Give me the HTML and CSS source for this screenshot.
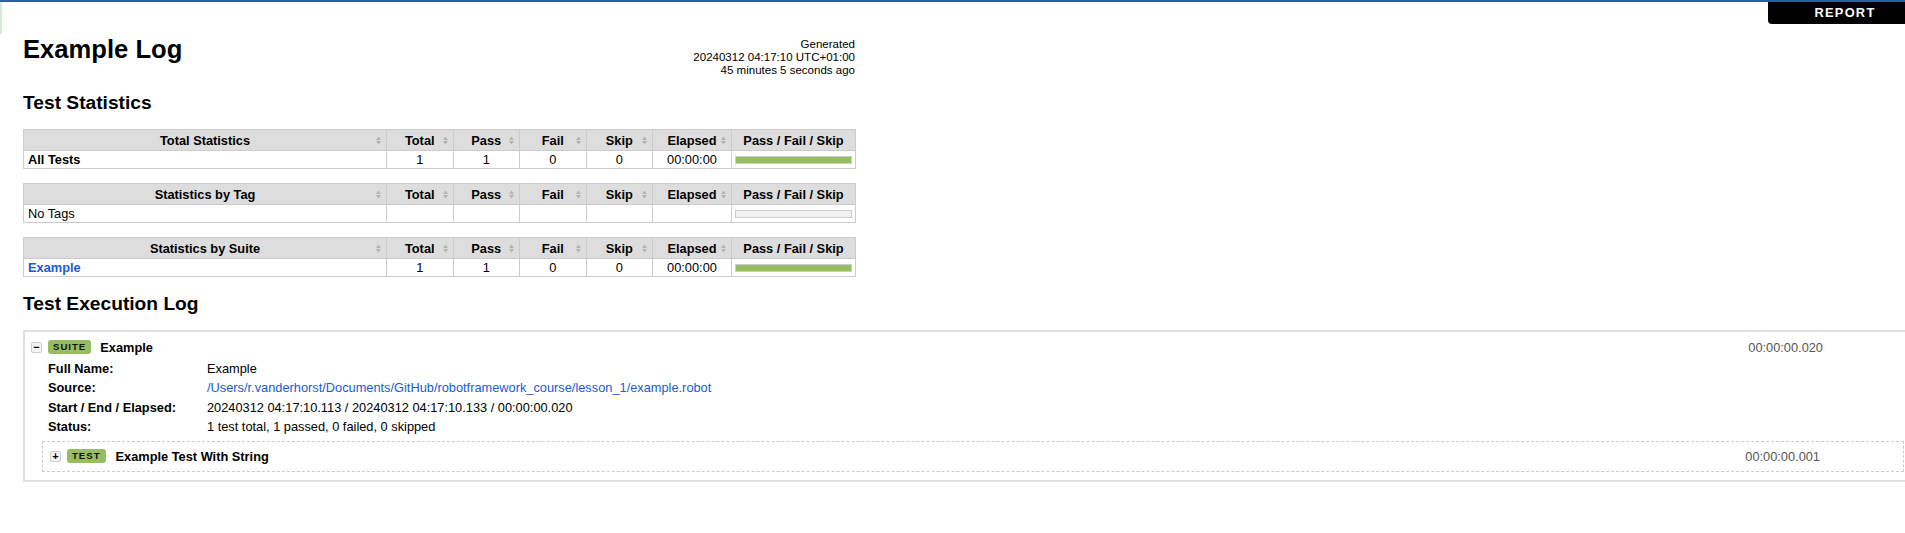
FILE: index.html
```html
<!DOCTYPE html>
<html lang="en">
<head>
<meta charset="utf-8">
<title>Example Log</title>
<link rel="stylesheet" href="styles.css">
</head>
<body>
<div class="topline"></div>
<div class="leftstrip"></div>
<a class="report-link" href="#">REPORT</a>
<div class="page">
  <div class="header">
    <h1 class="title">Example Log</h1>
    <div class="generated">Generated<br>20240312 04:17:10 UTC+01:00<br>45 minutes 5 seconds ago</div>
  </div>

  <h2 class="section-title">Test Statistics</h2>

  <table class="stats">
    <colgroup><col class="c-name"><col class="c-stat"><col class="c-stat"><col class="c-stat"><col class="c-stat"><col class="c-elapsed"><col class="c-graph"></colgroup>
    <thead><tr>
      <th>Total Statistics<svg class="sort" viewBox="0 0 5 9"><path d="M0 4L2.5 0.6L5 4Z M0 5L5 5L2.5 8.4Z"/></svg></th>
      <th>Total<svg class="sort" viewBox="0 0 5 9"><path d="M0 4L2.5 0.6L5 4Z M0 5L5 5L2.5 8.4Z"/></svg></th>
      <th>Pass<svg class="sort" viewBox="0 0 5 9"><path d="M0 4L2.5 0.6L5 4Z M0 5L5 5L2.5 8.4Z"/></svg></th>
      <th>Fail<svg class="sort" viewBox="0 0 5 9"><path d="M0 4L2.5 0.6L5 4Z M0 5L5 5L2.5 8.4Z"/></svg></th>
      <th>Skip<svg class="sort" viewBox="0 0 5 9"><path d="M0 4L2.5 0.6L5 4Z M0 5L5 5L2.5 8.4Z"/></svg></th>
      <th>Elapsed<svg class="sort" viewBox="0 0 5 9"><path d="M0 4L2.5 0.6L5 4Z M0 5L5 5L2.5 8.4Z"/></svg></th>
      <th>Pass / Fail / Skip</th>
    </tr></thead>
    <tbody><tr>
      <td class="name bold">All Tests</td>
      <td>1</td><td>1</td><td>0</td><td>0</td><td>00:00:00</td>
      <td class="graph-cell"><div class="graph"><div class="pass-bar"></div></div></td>
    </tr></tbody>
  </table>

  <table class="stats">
    <colgroup><col class="c-name"><col class="c-stat"><col class="c-stat"><col class="c-stat"><col class="c-stat"><col class="c-elapsed"><col class="c-graph"></colgroup>
    <thead><tr>
      <th>Statistics by Tag<svg class="sort" viewBox="0 0 5 9"><path d="M0 4L2.5 0.6L5 4Z M0 5L5 5L2.5 8.4Z"/></svg></th>
      <th>Total<svg class="sort" viewBox="0 0 5 9"><path d="M0 4L2.5 0.6L5 4Z M0 5L5 5L2.5 8.4Z"/></svg></th>
      <th>Pass<svg class="sort" viewBox="0 0 5 9"><path d="M0 4L2.5 0.6L5 4Z M0 5L5 5L2.5 8.4Z"/></svg></th>
      <th>Fail<svg class="sort" viewBox="0 0 5 9"><path d="M0 4L2.5 0.6L5 4Z M0 5L5 5L2.5 8.4Z"/></svg></th>
      <th>Skip<svg class="sort" viewBox="0 0 5 9"><path d="M0 4L2.5 0.6L5 4Z M0 5L5 5L2.5 8.4Z"/></svg></th>
      <th>Elapsed<svg class="sort" viewBox="0 0 5 9"><path d="M0 4L2.5 0.6L5 4Z M0 5L5 5L2.5 8.4Z"/></svg></th>
      <th>Pass / Fail / Skip</th>
    </tr></thead>
    <tbody><tr>
      <td class="name">No Tags</td>
      <td></td><td></td><td></td><td></td><td></td>
      <td class="graph-cell"><div class="graph"></div></td>
    </tr></tbody>
  </table>

  <table class="stats">
    <colgroup><col class="c-name"><col class="c-stat"><col class="c-stat"><col class="c-stat"><col class="c-stat"><col class="c-elapsed"><col class="c-graph"></colgroup>
    <thead><tr>
      <th>Statistics by Suite<svg class="sort" viewBox="0 0 5 9"><path d="M0 4L2.5 0.6L5 4Z M0 5L5 5L2.5 8.4Z"/></svg></th>
      <th>Total<svg class="sort" viewBox="0 0 5 9"><path d="M0 4L2.5 0.6L5 4Z M0 5L5 5L2.5 8.4Z"/></svg></th>
      <th>Pass<svg class="sort" viewBox="0 0 5 9"><path d="M0 4L2.5 0.6L5 4Z M0 5L5 5L2.5 8.4Z"/></svg></th>
      <th>Fail<svg class="sort" viewBox="0 0 5 9"><path d="M0 4L2.5 0.6L5 4Z M0 5L5 5L2.5 8.4Z"/></svg></th>
      <th>Skip<svg class="sort" viewBox="0 0 5 9"><path d="M0 4L2.5 0.6L5 4Z M0 5L5 5L2.5 8.4Z"/></svg></th>
      <th>Elapsed<svg class="sort" viewBox="0 0 5 9"><path d="M0 4L2.5 0.6L5 4Z M0 5L5 5L2.5 8.4Z"/></svg></th>
      <th>Pass / Fail / Skip</th>
    </tr></thead>
    <tbody><tr>
      <td class="name"><a class="suite-link" href="#">Example</a></td>
      <td>1</td><td>1</td><td>0</td><td>0</td><td>00:00:00</td>
      <td class="graph-cell"><div class="graph"><div class="pass-bar"></div></div></td>
    </tr></tbody>
  </table>

  <h2 class="section-title exec-title">Test Execution Log</h2>

  <div class="suite">
    <div class="el-header suite-header">
      <span class="toggle">&minus;</span>
      <span class="label">SUITE</span>
      <span class="el-name">Example</span>
      <span class="elapsed suite-elapsed">00:00:00.020</span>
    </div>
    <div class="meta">
      <div class="meta-label">Full Name:</div><div class="meta-value">Example</div>
      <div class="meta-label">Source:</div><div class="meta-value"><a class="src-link" href="#">/Users/r.vanderhorst/Documents/GitHub/robotframework_course/lesson_1/example.robot</a></div>
      <div class="meta-label">Start / End / Elapsed:</div><div class="meta-value">20240312 04:17:10.113 / 20240312 04:17:10.133 / 00:00:00.020</div>
      <div class="meta-label">Status:</div><div class="meta-value">1 test total, 1 passed, 0 failed, 0 skipped</div>
    </div>
    <div class="test">
      <div class="el-header test-header">
        <span class="toggle">+</span>
        <span class="label">TEST</span>
        <span class="el-name">Example Test With String</span>
        <span class="elapsed test-elapsed">00:00:00.001</span>
      </div>
    </div>
  </div>
</div>
</body>
</html>
```

FILE: styles.css
```css
html, body {
  margin: 0;
  padding: 0;
}
body {
  font-family: "Liberation Sans", Helvetica, Arial, sans-serif;
  font-size: 12.8px;
  color: #000;
  background: #fff;
  overflow-x: hidden;
}

.topline {
  position: absolute;
  top: 0;
  left: 0;
  width: 1922px;
  height: 2px;
  background: #2b5ea7;
  z-index: 5;
}
.leftstrip {
  position: absolute;
  top: 2px;
  left: 0;
  width: 2px;
  height: 32px;
  background: #d3ead3;
}
.report-link {
  position: absolute;
  top: 2px;
  left: 1768px;
  width: 154px;
  height: 22px;
  line-height: 22px;
  background: #000;
  color: #fff;
  text-align: center;
  font-weight: bold;
  letter-spacing: 0.1em;
  text-decoration: none;
  border-bottom-left-radius: 4px;
}

.page {
  padding: 34px 0 40px 23px;
}

.header {
  width: 832px;
  display: flex;
  justify-content: space-between;
  align-items: flex-start;
}
.title {
  margin: 0;
  font-size: 25.6px;
  line-height: 30px;
  font-weight: bold;
}
.generated {
  margin-top: 4px;
  font-size: 11.52px;
  line-height: 13px;
  text-align: right;
  white-space: nowrap;
}

.section-title {
  margin: 15px 0 15px 0;
  font-size: 19.2px;
  line-height: 22px;
  font-weight: bold;
}
.exec-title {
  margin-top: 16px;
}

.stats {
  width: 832px;
  table-layout: fixed;
  border-collapse: collapse;
  margin-bottom: 14px;
}
.c-name { width: 363px; }
.c-stat { width: 66.5px; }
.c-elapsed { width: 79px; }
.c-graph { width: 124px; }

.stats th {
  position: relative;
  background: #ddd;
  border: 1px solid #ccc;
  height: 20px;
  padding: 0;
  font-weight: bold;
  text-align: center;
  white-space: nowrap;
}
.stats td {
  border: 1px solid #ccc;
  height: 17px;
  padding: 0 4px;
  text-align: center;
  white-space: nowrap;
}
.stats td.name {
  text-align: left;
}
.bold {
  font-weight: bold;
}
.sort {
  position: absolute;
  right: 5px;
  top: 6px;
  width: 5px;
  height: 9px;
  fill: #b3b3b3;
}
.suite-link {
  color: #1a5bd6;
  font-weight: bold;
  text-decoration: none;
}
.stats td.graph-cell {
  padding: 0 3px;
}
.graph {
  height: 6px;
  border: 1px solid #ccc;
  background: #f2f2f2;
}
.pass-bar {
  height: 100%;
  width: 100%;
  background: #97bd61;
}

.suite {
  width: 1899px;
  box-sizing: border-box;
  border: 2px solid #e0e0e0;
  padding: 5px 0 8px 6px;
}
.el-header {
  display: flex;
  align-items: center;
  height: 20px;
}
.toggle {
  display: inline-flex;
  align-items: center;
  justify-content: center;
  width: 9px;
  height: 9px;
  border: 1px solid #ccc;
  border-radius: 2px;
  background: #f4f4f4;
  font-weight: bold;
  font-size: 11px;
  line-height: 9px;
  margin-right: 6px;
}
.label {
  display: inline-block;
  background: #97bd61;
  border-radius: 3px;
  padding: 0 5px;
  height: 14px;
  line-height: 14px;
  font-size: 9.6px;
  font-weight: bold;
  letter-spacing: 1px;
  color: #111;
  margin-right: 9px;
}
.el-name {
  font-weight: bold;
  flex: 1;
}
.elapsed {
  color: #555;
}
.suite-elapsed {
  margin-right: 97px;
}
.test-elapsed {
  margin-right: 83px;
}

.meta {
  display: grid;
  grid-template-columns: 159px 1fr;
  margin: 2px 0 0 17px;
  line-height: 19.3px;
}
.meta-label {
  font-weight: bold;
}
.src-link {
  color: #1a5bd6;
  text-decoration: none;
}

.test {
  margin: 5px 16px 0 11px;
  border: 1px dashed #ccc;
  padding: 4px 0 5px 7px;
}
.test-header .label {
  margin-right: 10px;
}
```
